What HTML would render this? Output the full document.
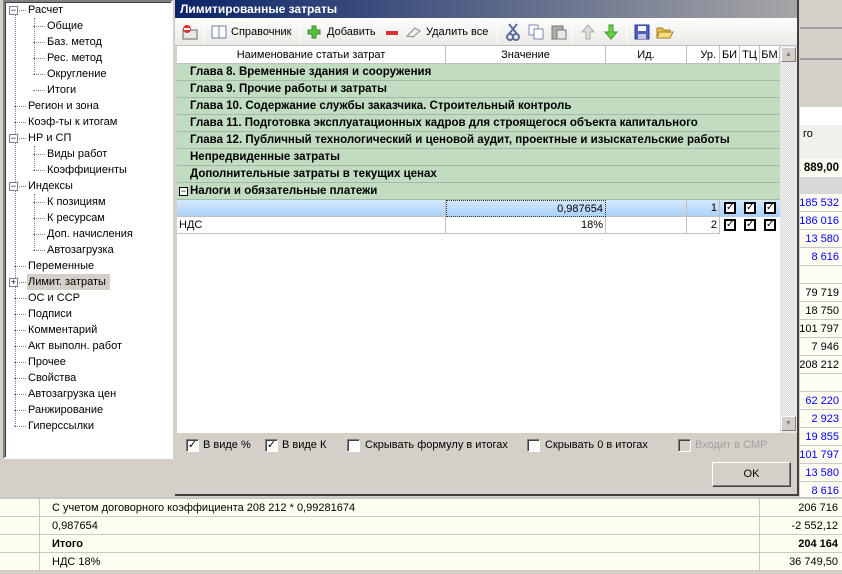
<!DOCTYPE html>
<html><head><meta charset="utf-8"><style>
*{margin:0;padding:0;box-sizing:border-box}
body{width:842px;height:574px;overflow:hidden;background:#d4d0c8;font-family:"Liberation Sans","DejaVu Sans",sans-serif;font-size:11px;position:relative;color:#000}
.a{position:absolute}
.tree{left:3px;top:0;width:170px;height:459px;background:#fff;border:2px solid;border-color:#808080 #fff #fff #808080;box-shadow:inset 1px 1px 0 #404040}
.ti{position:absolute;height:14px;line-height:14px;white-space:nowrap}
.exp{position:absolute;width:9px;height:9px;border:1px solid #808080;background:#fff;font-size:9px;line-height:7px;text-align:center}
.dl{position:absolute;border-left:1px dotted #808080}
.dh{position:absolute;border-top:1px dotted #808080;width:8px}
.dlg{left:175px;top:0;width:624px;height:496px;background:#d4d0c8;border-right:2px solid #404040;border-bottom:2px solid #404040}
.title{left:0;top:0;width:622px;height:18px;background:linear-gradient(90deg,#0a246a,#a6a6a6);color:#fff;font-weight:bold;font-size:12px;line-height:18px;padding-left:5px}
.tb{left:0;top:18px;width:622px;height:28px;background:linear-gradient(#fdfdfd,#ebeae5);border-bottom:1px solid #c0c0c0}
.tbt{position:absolute;top:8px;font-size:11px;color:#000}
.sep{position:absolute;top:4px;width:1px;height:21px;background:#c8c8c8;border-right:1px solid #fff}
.grid{left:2px;top:46px;width:620px;height:387px;background:#fff}
.hd{position:absolute;top:0;height:18px;line-height:18px;text-align:center;border-right:1px solid #c0c0c0;border-bottom:1px solid #c0c0c0;background:#fff}
.gr{position:absolute;left:0;width:603px;height:17px;background:#c2dcc2;border-bottom:1px solid #a8b8a8;font-weight:bold;font-size:11.5px;line-height:16px;padding-left:13px;white-space:nowrap}
.cell{position:absolute;height:17px;border-right:1px solid #c0c0c0;border-bottom:1px solid #c0c0c0;line-height:16px;padding:0 2px}
.cb{position:absolute;width:12px;height:12px;border:2px solid #000;background:#fff;font-size:10px;line-height:8px;text-align:center;font-weight:bold}
.chk{position:absolute;top:439px;width:13px;height:13px;background:#fff;border:1px solid;border-color:#808080 #fff #fff #808080;box-shadow:inset 1px 1px 0 #404040;font-size:11px;line-height:11px;text-align:center}
.cl{position:absolute;top:439px;font-size:11px}
.rn{position:absolute;left:800px;width:42px;height:18px;line-height:18px;font-size:11px;background:#fdfdf3;border-bottom:1px solid #c8c8c8;color:#00f;overflow:hidden;white-space:nowrap}
.rn span{position:absolute;right:3px}
.br{position:absolute;left:0;width:842px;height:18px;background:#fdfdf0;border-bottom:1px solid #c8c8c8;line-height:18px}
</style></head><body>

<div class="a tree">
<div class="dl" style="left:10px;top:8px;height:416px"></div>
<div class="dl" style="left:29px;top:16px;height:56px"></div>
<div class="dl" style="left:29px;top:144px;height:24px"></div>
<div class="dl" style="left:29px;top:192px;height:56px"></div>
</div>
<div id="t"></div>
<script>
var items=[["Расчет",0,1],["Общие",1],["Баз. метод",1],["Рес. метод",1],["Округление",1],["Итоги",1],["Регион и зона",0],["Коэф-ты к итогам",0],["НР и СП",0,1],["Виды работ",1],["Коэффициенты",1],["Индексы",0,1],["К позициям",1],["К ресурсам",1],["Доп. начисления",1],["Автозагрузка",1],["Переменные",0],["Лимит. затраты",0,2],["ОС и ССР",0],["Подписи",0],["Комментарий",0],["Акт выполн. работ",0],["Прочее",0],["Свойства",0],["Автозагрузка цен",0],["Ранжирование",0],["Гиперссылки",0]];
var h="";items.forEach(function(it,i){var y=3+i*16;var x=it[1]?47:28;
h+='<div class="dh" style="left:'+(it[1]?33:14)+'px;top:'+(y+7)+'px;width:12px"></div>';
if(it[2])h+='<div class="exp" style="left:9px;top:'+(y+3)+'px">'+(it[2]==2?'+':'−')+'</div>';
h+='<div class="ti" style="left:'+(it[2]==2?27:x)+'px;top:'+(it[2]==2?y-1:y)+'px;'+(it[2]==2?'background:#d4d0c8;padding:1px 4px 1px 1px;height:16px':'')+'">'+it[0]+'</div>';});
document.getElementById('t').innerHTML=h;
</script>

<div class="a" style="left:800px;top:0;width:42px;height:497px;background:#d4d0c8"></div>
<div class="a" style="left:800px;top:27px;width:42px;height:2px;background:#a0a0a0"></div>
<div class="a" style="left:800px;top:58px;width:42px;height:2px;background:#a0a0a0"></div>
<div class="a" style="left:800px;top:107px;width:42px;height:18px;background:#fff"></div>
<div class="a" style="left:800px;top:125px;width:42px;height:52px;background:#f0f0ec;border-bottom:1px solid #c0c0c0;font-size:11px;padding:3px 0 0 3px">го</div>
<div class="a" style="left:800px;top:159px;width:42px;height:18px;background:#fdfdf3;font-weight:bold;font-size:11.5px;line-height:18px;overflow:hidden;white-space:nowrap"><span class="a" style="right:3px">1 889,00</span></div>
<div class="a" style="left:800px;top:177px;width:42px;height:18px;background:#d8d8d8"></div>
<div id="r"></div>
<script>
var r=[["185 532",1],["186 016",1],["13 580",1],["8 616",1],["",0],["79 719",0],["18 750",0],["101 797",0],["7 946",0],["208 212",0],["",0],["62 220",1],["2 923",1],["19 855",1],["101 797",1],["13 580",1],["8 616",1]];
var h="";r.forEach(function(v,i){h+='<div class="rn" style="top:'+(194+i*18)+'px;color:'+(v[1]?'#00f':'#000')+'"><span>'+v[0]+'</span></div>'});
document.getElementById('r').innerHTML=h;
</script>

<div class="a" style="left:0;top:497px;width:842px;height:2px;background:#c8c8c8"></div>
<div class="br" style="top:499px"><span class="a" style="left:52px">С учетом договорного коэффициента 208 212 * 0,99281674</span><span class="a" style="right:4px">206 716</span></div>
<div class="br" style="top:517px"><span class="a" style="left:52px">0,987654</span><span class="a" style="right:4px">-2 552,12</span></div>
<div class="br" style="top:535px;font-weight:bold"><span class="a" style="left:52px">Итого</span><span class="a" style="right:4px">204 164</span></div>
<div class="br" style="top:553px"><span class="a" style="left:52px">НДС 18%</span><span class="a" style="right:4px">36 749,50</span></div>
<div class="a" style="left:39px;top:499px;width:1px;height:75px;background:#c8c8c8"></div>
<div class="a" style="left:759px;top:499px;width:1px;height:75px;background:#c8c8c8"></div>

<div class="a dlg">
<div class="a title">Лимитированные затраты</div>
<div class="a tb">
 <svg class="a" style="left:6px;top:6px" width="18" height="16"><rect x="2" y="6" width="14" height="9" fill="#e8e8e8" stroke="#666"/><circle cx="6" cy="5" r="4" fill="#d33"/><rect x="3" y="4" width="6" height="2" fill="#fff"/></svg>
 <div class="sep" style="left:29px"></div>
 <svg class="a" style="left:36px;top:7px" width="16" height="14"><rect x="1" y="1" width="14" height="12" fill="#fff" stroke="#6a7fa8"/><line x1="8" y1="1" x2="8" y2="13" stroke="#6a7fa8"/></svg>
 <span class="tbt" style="left:56px">Справочник</span>
 <div class="sep" style="left:124px"></div>
 <svg class="a" style="left:132px;top:7px" width="14" height="14"><path d="M5 1h4v4h4v4H9v4H5V9H1V5h4z" fill="#5cc040" stroke="#3a8a2a"/></svg>
 <span class="tbt" style="left:152px">Добавить</span>
 <div class="a" style="left:211px;top:13px;width:12px;height:4px;background:#e03030"></div>
 <svg class="a" style="left:230px;top:8px" width="16" height="12"><path d="M2 10l8-8 5 3-7 6z" fill="#eee" stroke="#888"/></svg>
 <span class="tbt" style="left:251px">Удалить все</span>
 <div class="sep" style="left:322px"></div>
 <svg class="a" style="left:331px;top:5px" width="14" height="18"><path d="M3 1l8 10M11 1L3 11" stroke="#5a6fa0" stroke-width="2"/><circle cx="4" cy="14" r="3" fill="none" stroke="#5a6fa0" stroke-width="2"/><circle cx="10" cy="14" r="3" fill="none" stroke="#5a6fa0" stroke-width="2"/></svg>
 <svg class="a" style="left:353px;top:6px" width="16" height="16"><rect x="1" y="1" width="9" height="10" fill="#fff" stroke="#7a8ab0"/><rect x="6" y="5" width="9" height="10" fill="#fff" stroke="#7a8ab0"/></svg>
 <svg class="a" style="left:376px;top:6px" width="16" height="16"><rect x="1" y="2" width="11" height="13" fill="#b0aca0" stroke="#777"/><rect x="6" y="6" width="9" height="9" fill="#e8e8e8" stroke="#777"/></svg>
 <div class="sep" style="left:397px"></div>
 <svg class="a" style="left:406px;top:6px" width="14" height="16"><path d="M7 1l6 7H9v7H5V8H1z" fill="#ddd" stroke="#aaa"/></svg>
 <svg class="a" style="left:429px;top:6px" width="14" height="16"><path d="M7 15l6-7H9V1H5v7H1z" fill="#6cd040" stroke="#3a9a2a"/></svg>
 <div class="sep" style="left:451px"></div>
 <svg class="a" style="left:459px;top:6px" width="16" height="16"><rect x="1" y="1" width="14" height="14" fill="#5060c0" stroke="#303a90"/><rect x="4" y="2" width="8" height="5" fill="#fff"/><rect x="4" y="10" width="8" height="5" fill="#c0c8e0"/></svg>
 <svg class="a" style="left:481px;top:6px" width="18" height="16"><path d="M1 4h5l2 2h6v8H1z" fill="#e8c050" stroke="#a08020"/><path d="M3 8h14l-3 6H1z" fill="#f8dc80" stroke="#a08020"/></svg>
</div>
<div class="a grid">
 <div class="hd" style="left:0;width:269px">Наименование статьи затрат</div>
 <div class="hd" style="left:269px;width:160px">Значение</div>
 <div class="hd" style="left:429px;width:81px">Ид.</div>
 <div class="hd" style="left:510px;width:33px;text-align:right;padding-right:3px">Ур.</div>
 <div class="hd" style="left:543px;width:20px">БИ</div>
 <div class="hd" style="left:563px;width:20px">ТЦ</div>
 <div class="hd" style="left:583px;width:20px">БМ</div>
 <div class="gr" style="top:18px">Глава 8. Временные здания и сооружения</div>
 <div class="gr" style="top:35px">Глава 9. Прочие работы и затраты</div>
 <div class="gr" style="top:52px">Глава 10. Содержание службы заказчика. Строительный контроль</div>
 <div class="gr" style="top:69px">Глава 11. Подготовка эксплуатационных кадров для строящегося объекта капитального</div>
 <div class="gr" style="top:86px">Глава 12. Публичный технологический и ценовой аудит, проектные и изыскательские работы</div>
 <div class="gr" style="top:103px">Непредвиденные затраты</div>
 <div class="gr" style="top:120px">Дополнительные затраты в текущих ценах</div>
 <div class="gr" style="top:137px;padding-left:13px">Налоги и обязательные платежи</div>
 <div class="exp" style="left:2px;top:141px;border-color:#000;line-height:7px">−</div>
 <div class="a" style="left:0;top:154px;width:603px;height:17px;background:linear-gradient(#d4e8fc,#a8d0f8)"></div>
 <div class="cell" style="left:0;top:154px;width:269px"></div>
 <div class="cell" style="left:269px;top:154px;width:160px;text-align:right;border:1px dotted #333">0,987654</div>
 <div class="cell" style="left:429px;top:154px;width:81px"></div>
 <div class="cell" style="left:510px;top:154px;width:33px;text-align:right">1</div>
 <div class="cell" style="left:0;top:171px;width:269px">НДС</div>
 <div class="cell" style="left:269px;top:171px;width:160px;text-align:right">18%</div>
 <div class="cell" style="left:429px;top:171px;width:81px"></div>
 <div class="cell" style="left:510px;top:171px;width:33px;text-align:right">2</div>
 <div class="cb" style="left:547px;top:156px">✓</div><div class="cb" style="left:567px;top:156px">✓</div><div class="cb" style="left:587px;top:156px">✓</div>
 <div class="cb" style="left:547px;top:173px">✓</div><div class="cb" style="left:567px;top:173px">✓</div><div class="cb" style="left:587px;top:173px">✓</div>
 <div class="a" style="left:603px;top:0;width:17px;height:387px;background:repeating-conic-gradient(#d8d8d8 0 25%,#f4f4f4 0 50%) 0 0/2px 2px"></div>
 <div class="a" style="left:604px;top:1px;width:15px;height:15px;background:#d4d0c8;border:1px solid;border-color:#fff #808080 #808080 #fff;font-size:7px;text-align:center;line-height:13px;color:#808080">▲</div>
 <div class="a" style="left:604px;top:370px;width:15px;height:15px;background:#d4d0c8;border:1px solid;border-color:#fff #808080 #808080 #fff;font-size:7px;text-align:center;line-height:13px;color:#808080">▼</div>
</div>
<div class="chk" style="left:11px">✓</div><span class="cl" style="left:28px">В виде %</span>
<div class="chk" style="left:90px">✓</div><span class="cl" style="left:107px">В виде К</span>
<div class="chk" style="left:172px"></div><span class="cl" style="left:190px">Скрывать формулу в итогах</span>
<div class="chk" style="left:352px"></div><span class="cl" style="left:370px">Скрывать 0 в итогах</span>
<div class="chk" style="left:503px;background:#d4d0c8"></div><span class="cl" style="left:520px;color:#a0a0a0">Входит в СМР</span>
<div class="a" style="left:537px;top:462px;width:79px;height:25px;border:1px solid;border-color:#fff #404040 #404040 #fff;box-shadow:inset -1px -1px 0 #808080;text-align:center;line-height:23px">OK</div>
</div>
</body></html>
